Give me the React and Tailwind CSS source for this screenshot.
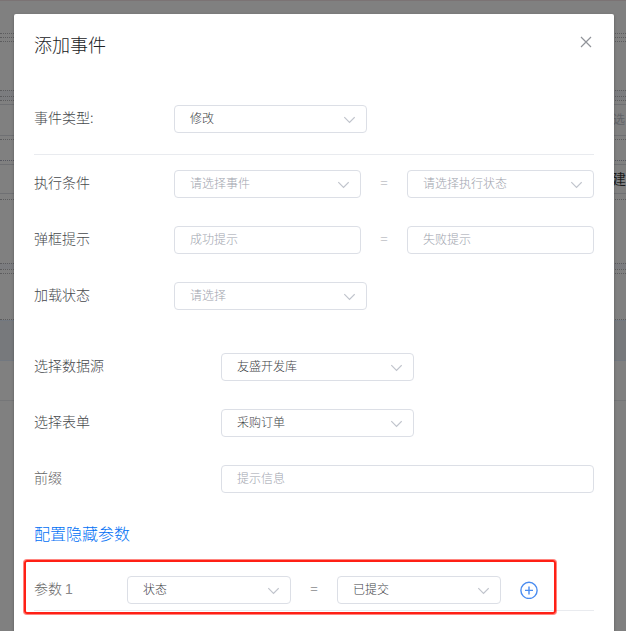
import clsx from "clsx";

// rows of the page under the mask, top to bottom
const pageRows = [
  "h-[33px] border-t border-[#7b7374]",
  "h-1 border-t border-dotted border-[#5c5c5e]",
  "h-1 border-t border-dotted border-[#5c5c5e]",
  "h-[49px] border-t border-dotted border-[#5c5c5e]",
  "h-1.5 border-t border-dotted border-[#5c5c5e] bg-[#7b7c7f]",
  "h-1 border-t border-dotted border-[#5c5c5e] bg-[#7b7c7f]",
  "h-1 border-t border-dotted border-[#5c5c5e]",
  "h-[31px] border-t border-[#6f7073]",
  "h-1 border-t border-[#6f7073]",
  "h-[21px] border-t border-dotted border-[#5c5c5e]",
  "h-1 border-t border-dotted border-[#55565f]",
  "h-[29px] border-t border-[#6f7073]",
  "h-1.5 border-t border-[#6f7073]",
  "h-16 border-t border-dotted border-[#5c5c5e]",
  "h-1.5 border-t border-dotted border-[#5c5c5e] bg-[#7b7c7f]",
  "h-1 border-t border-dotted border-[#5c5c5e]",
  "h-[46px] border-t border-dotted border-[#5c5c5e]",
  "h-px border-t border-dotted border-[#5c5c5e]",
  "h-[40px] border-t border-[#727880] bg-[#77797c]",
  "h-[40px] border-t border-[#727880]",
  "h-[231px] border-t border-[#757678]",
];

function Chevron() {
  return (
    <svg width="12" height="12" viewBox="0 0 12 12" fill="none" stroke="#c0c4cc" strokeWidth="1.2" className="mt-0.5 shrink-0">
      <path d="M1.3 3.2 6.5 8.4 11.7 3.2" />
    </svg>
  );
}

function Field({ value, placeholder, select, className }) {
  return (
    <div
      className={clsx(
        "flex h-7 items-center justify-between rounded-[4px] border border-[#dcdfe6] bg-white pr-[11px] pl-[15px] text-xs leading-none",
        value ? "text-[#404246]" : "text-[#a0a4ae]",
        className
      )}
    >
      <span className="-mt-0.5">{value || placeholder}</span>
      {select && <Chevron />}
    </div>
  );
}

function Row({ label, wide, className, labelClass = "text-[#46484c]", children }) {
  return (
    <div className={clsx("flex h-7 items-center", className)}>
      <div className={clsx("-mt-1 shrink-0 text-sm leading-none", wide ? "w-[187px]" : "w-[140px]", labelClass)}>
        {label}
      </div>
      {children}
    </div>
  );
}

function Equals({ className }) {
  return <span className={clsx("-mt-[3px] w-[46px] text-center font-['Open_Sans'] text-sm leading-none", className)}>=</span>;
}

function Backdrop() {
  return (
    <div className="h-full bg-[#808080]">
      {pageRows.map((row, i) => (
        <div key={i} className={row} />
      ))}
      <span className="absolute top-[113px] left-[613px] text-xs leading-none font-normal text-[#626468]">选</span>
      <span className="absolute top-[171px] left-[612px] text-sm leading-none font-normal text-[#1c1c1c]">建</span>
    </div>
  );
}

function App() {
  return (
    <div className="relative h-[631px] w-[626px] overflow-hidden font-['Noto_Sans_CJK_SC',sans-serif] font-light">
      <Backdrop />
      <div className="absolute top-3.5 left-3.5 h-[640px] w-[600px] rounded-[2px] bg-white px-5 shadow-[0_1px_3px_rgba(0,0,0,0.3)]">
        <div className="flex items-start justify-between pt-[22px]">
          <h1 className="-mt-px text-lg leading-[18px] font-light text-[#202124]">添加事件</h1>
          <svg width="16" height="16" viewBox="0 0 16 16" stroke="#909399" strokeWidth="1.2" className="-mt-0.5">
            <path d="M3 3 13 13M13 3 3 13" />
          </svg>
        </div>

        <Row label="事件类型:" className="mt-[52px]">
          <Field value="修改" select className="w-[193px]" />
        </Row>
        <div className="mt-[21px] border-t border-[#e9ebef]" />

        <Row label="执行条件" className="mt-[15px]">
          <Field placeholder="请选择事件" select className="w-[187px]" />
          <Equals className="text-[#a4a7ae]" />
          <Field placeholder="请选择执行状态" select className="w-[187px]" />
        </Row>
        <Row label="弹框提示" className="mt-7">
          <Field placeholder="成功提示" className="w-[187px]" />
          <Equals className="text-[#a4a7ae]" />
          <Field placeholder="失败提示" className="w-[187px]" />
        </Row>
        <Row label="加载状态" className="mt-7">
          <Field placeholder="请选择" select className="w-[193px]" />
        </Row>

        <Row label="选择数据源" wide className="mt-[43px]">
          <Field value="友盛开发库" select className="w-[193px]" />
        </Row>
        <Row label="选择表单" wide className="mt-7">
          <Field value="采购订单" select className="w-[193px]" />
        </Row>
        <Row label="前缀" wide labelClass="text-[#686868]" className="mt-7">
          <Field placeholder="提示信息" className="w-[373px]" />
        </Row>

        <h2 className="mt-8 text-base leading-4 text-[#0070f5]">配置隐藏参数</h2>

        <div className="relative mt-[35px] flex h-7 items-center">
          <div className="-mt-1 w-[93px] text-sm leading-none text-[#686868]">
            参数 <span className="font-['Liberation_Sans'] text-[#888888]">1</span>
          </div>
          <Field value="状态" select className="w-[164px]" />
          <Equals className="text-[#505256]" />
          <Field value="已提交" select className="w-[164px]" />
          <svg width="18" height="18" viewBox="0 0 18 18" fill="none" stroke="#4a8cf0" strokeWidth="1.4" className="ml-[19px]">
            <circle cx="9" cy="9.4" r="8.1" />
            <path d="M9 5.4v8M5 9.4h8" />
          </svg>
          <div className="absolute -top-4 -left-2.5 h-[54px] w-[532px] rounded-[3px] border-2 border-[#ff2015] shadow-[0_0_0_1px_rgba(255,32,21,0.55)]" />
        </div>
        <div className="mt-1.5 border-t border-[#e9ebef]" />
      </div>
    </div>
  );
}

export default App;
